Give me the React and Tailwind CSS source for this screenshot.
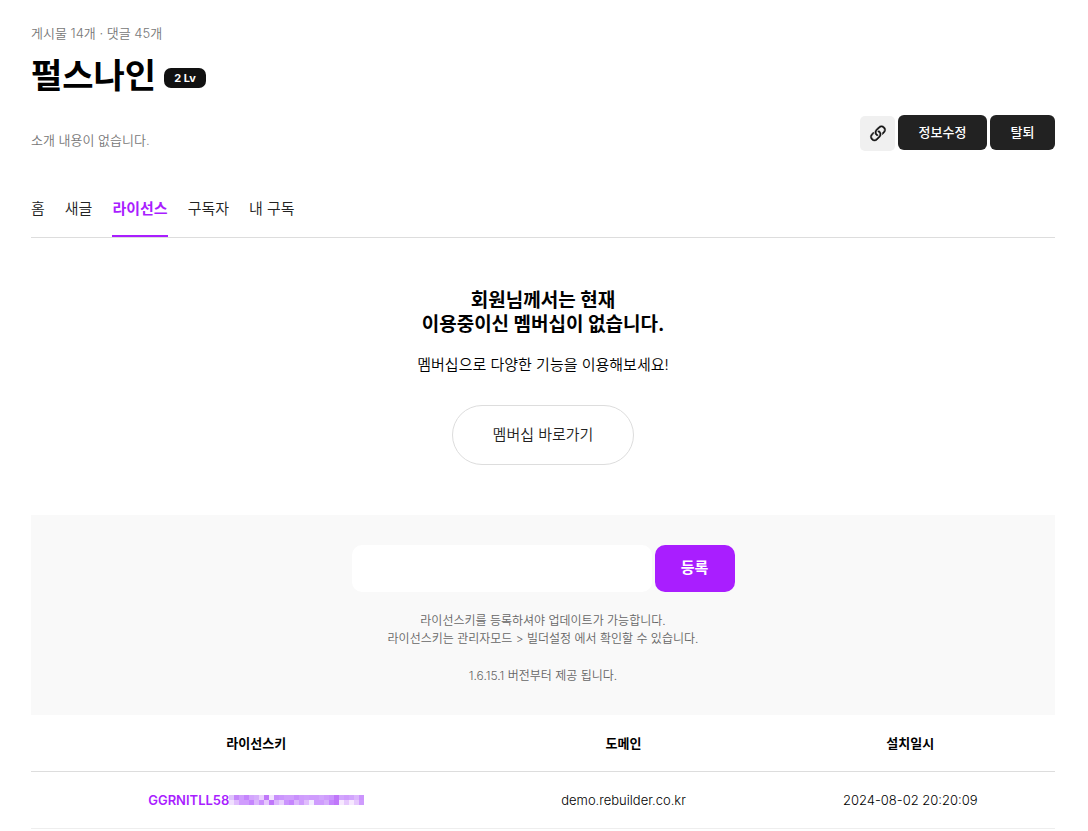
import React from "react";

const TABS = ["홈", "새글", "라이선스", "구독자", "내 구독"];

const MASK = [
  "#dfc4fb", "#c587fb", "#cf9cfd", "#c585fd", "#d3a5fd", "#d6aefc", "#eacffd", "#c077fa", "#f2e4fe",
  "#c88ffc", "#cb96fd", "#d09efd", "#d09efd", "#c990fd", "#cf9cfd", "#d0a0fd", "#cf9cfd", "#cf9cfd",
  "#d2a5fd", "#cf9cfd", "#cb94fd", "#c077fa", "#d2a5fd", "#cf9cfd", "#d2a5fd", "#dcb6fd", "#cb94fd",
  "#f0e0fe", "#e0bdfd", "#d09cfd", "#d09cfd", "#c585fd", "#dcb6fd", "#cb90fd", "#e6c8fd", "#c077fa",
  "#dcb6fd", "#e8cffd", "#cb94fd", "#c585fd", "#dcb6fd", "#cf9cfd", "#e0bdfd", "#f2ecfe", "#cf9cfd",
  "#cf9cfd", "#d6aefc", "#c585fd", "#c077fa", "#f6e8fe", "#e6c8fd", "#f6e8fe", "#e6c8fd", "#cf9cfd",
];

function MaskedKey() {
  return (
    <svg aria-hidden="true" width="135" height="10" viewBox="0 0 135 10" shapeRendering="crispEdges" className="block">
      {MASK.map((fill, i) => (
        <rect key={i} x={(i % 27) * 5} y={Math.floor(i / 27) * 5} width="5" height="5" fill={fill} />
      ))}
    </svg>
  );
}

function LinkIcon() {
  return (
    <svg aria-hidden="true" width="22" height="22" viewBox="0 0 16 16" fill="#111" stroke="#111" strokeWidth="0.35">
      <path d="M4.715 6.542 3.343 7.914a3 3 0 1 0 4.243 4.243l1.828-1.829A3 3 0 0 0 8.586 5.5L8 6.086a1 1 0 0 0-.154.199 2 2 0 0 1 .861 3.337L6.88 11.45a2 2 0 1 1-2.83-2.83l.793-.792a4 4 0 0 1-.128-1.287z" />
      <path d="M6.586 4.672A3 3 0 0 0 7.414 9.5l.775-.776a2 2 0 0 1-.896-3.346L9.12 3.55a2 2 0 1 1 2.83 2.83l-.793.792c.112.42.155.855.128 1.287l1.372-1.372a3 3 0 1 0-4.243-4.243z" />
    </svg>
  );
}

export default function App() {
  return (
    <main className="bg-white pt-[24px] pr-[33px] pl-[31px] font-[Inter,'Noto_Sans_CJK_KR',sans-serif] font-[350] text-black">
      <header>
        <p className="text-[13px] leading-[18px] text-[#777]">게시물 14개 · 댓글 45개</p>
        <div className="mt-[10px] flex items-center gap-[8px]">
          <h1 className="text-[34px] leading-[48px] font-bold">펄스나인</h1>
          <span className="mt-[3px] rounded-[7px] bg-[#111] px-[10px] text-[11px] leading-[20px] font-bold text-white">2 Lv</span>
        </div>
        <div className="mt-[15px] flex items-start justify-between">
          <p className="mt-[16px] text-[13px] leading-[18px] text-[#777]">소개 내용이 없습니다.</p>
          <div className="flex gap-[3px]">
            <button type="button" aria-label="링크 복사" className="mt-px flex size-[35px] items-center justify-center rounded-[5px] bg-[#f0f0f0]">
              <LinkIcon />
            </button>
            <button type="button" className="h-[35px] min-w-[89px] rounded-[6px] bg-[#222] px-[20px] text-[13px] font-medium text-white">정보수정</button>
            <button type="button" className="h-[35px] min-w-[65px] rounded-[6px] bg-[#222] px-[20px] text-[13px] font-medium text-white">탈퇴</button>
          </div>
        </div>
      </header>

      <nav className="mt-[47px] flex gap-[20px] border-b border-[#ddd] text-[15px] leading-[22px]">
        {TABS.map((tab) => (
          <a
            key={tab}
            href="#"
            className={tab === "라이선스" ? "border-b-2 border-[#a91eff] pb-[15px] font-bold text-[#a91eff]" : "pb-[15px] text-[#222]"}
          >
            {tab}
          </a>
        ))}
      </nav>

      <section className="flex flex-col items-center pt-[51px] pb-[50px] text-center">
        <h2 className="text-[19px] leading-[24px] font-bold">
          회원님께서는 현재<br />이용중이신 멤버십이 없습니다.
        </h2>
        <p className="mt-[18px] text-[15px] leading-[20px]">멤버십으로 다양한 기능을 이용해보세요!</p>
        <a href="#" className="mt-[30px] rounded-full border border-[#ddd] px-[40px] text-[15px] leading-[58px] text-[#222]">멤버십 바로가기</a>
      </section>

      <form className="bg-[#f9f9f9] px-[20px] py-[30px] text-center" onSubmit={(e) => e.preventDefault()}>
        <div className="flex justify-center gap-[3px]">
          <input type="text" aria-label="라이선스키" className="h-[47px] w-[300px] rounded-[10px] bg-white px-[15px] text-[15px] outline-none" />
          <button type="submit" className="h-[47px] w-[80px] rounded-[10px] bg-[#a91eff] text-[15px] font-bold text-white">등록</button>
        </div>
        <p className="mt-[20px] text-[12px] leading-[18px] text-[#666]">
          라이선스키를 등록하셔야 업데이트가 가능합니다.<br />
          라이선스키는 관리자모드 &gt; 빌더설정 에서 확인할 수 있습니다.
        </p>
        <p className="mt-[19px] text-[12px] leading-[18px] text-[#666]">1.6.15.1 버전부터 제공 됩니다.</p>
      </form>

      <table className="w-full table-fixed border-collapse text-center text-[13px] leading-[20px]">
        <colgroup>
          <col className="w-[44%]" />
          <col className="w-[284px]" />
          <col />
        </colgroup>
        <thead>
          <tr className="h-[56px] border-b border-[#ddd]">
            <th className="font-bold">라이선스키</th>
            <th className="font-bold">도메인</th>
            <th className="font-bold">설치일시</th>
          </tr>
        </thead>
        <tbody>
          <tr className="h-[57px] border-b border-[#eee]">
            <td className="font-semibold text-[#a91eff]">
              <div className="flex items-center justify-center">
                <span>GGRNITLL58</span>
                <MaskedKey />
              </div>
            </td>
            <td>demo.rebuilder.co.kr</td>
            <td>2024-08-02 20:20:09</td>
          </tr>
        </tbody>
      </table>
    </main>
  );
}
